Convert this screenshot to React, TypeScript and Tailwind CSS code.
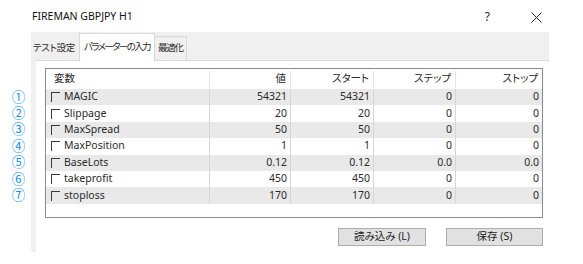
type Param = { name: string; value: string; start: string; step: string; stop: string };

const params: Param[] = [
  { name: "MAGIC", value: "54321", start: "54321", step: "0", stop: "0" },
  { name: "Slippage", value: "20", start: "20", step: "0", stop: "0" },
  { name: "MaxSpread", value: "50", start: "50", step: "0", stop: "0" },
  { name: "MaxPosition", value: "1", start: "1", step: "0", stop: "0" },
  { name: "BaseLots", value: "0.12", start: "0.12", step: "0.0", stop: "0.0" },
  { name: "takeprofit", value: "450", start: "450", step: "0", stop: "0" },
  { name: "stoploss", value: "170", start: "170", step: "0", stop: "0" },
];

const marks = ["①", "②", "③", "④", "⑤", "⑥", "⑦"];

// 列幅: 変数 / 値 / スタート / ステップ / ストップ
const cols = "grid grid-cols-[164px_81px_83px_82px_86px]";

function Checkbox() {
  return <span className="mr-[4px] inline-block h-[10px] w-[9px] shrink-0 border-l border-t border-[#3a3a3a]" />;
}

function ParamTable() {
  return (
    <div className="h-[150px] w-[498px] border border-[#8a8a8a] bg-white">
      <div className={`${cols} h-[20px] items-center whitespace-nowrap`}>
        <div className="border-r border-[#e3e3e3] pl-[8px]">変数</div>
        <div className="border-r border-[#e3e3e3] pr-[4px] text-right">値</div>
        <div className="border-r border-[#e3e3e3] pr-[4px] text-right">スタート</div>
        <div className="border-r border-[#e3e3e3] pr-[4px] text-right">ステップ</div>
        <div className="pr-[4px] text-right">ストップ</div>
      </div>
      {params.map((p, i) => (
        <div key={p.name} className={`${cols} h-[16.4px] items-center ${i % 2 === 0 ? "bg-[#e9e9e9]" : "bg-white"}`}>
          <div className="flex h-full items-center border-r border-[#d6d6d6] pl-[5px]">
            <Checkbox />
            <span className="text-[#2a2a2a]">{p.name}</span>
          </div>
          <div className="flex h-full items-center justify-end border-r border-[#d6d6d6] pr-[3px]">{p.value}</div>
          <div className="flex h-full items-center justify-end border-r border-[#d6d6d6] pr-[3px]">{p.start}</div>
          <div className="flex h-full items-center justify-end border-r border-[#d6d6d6] pr-[3px]">{p.step}</div>
          <div className="flex h-full items-center justify-end pr-[3px]">{p.stop}</div>
        </div>
      ))}
    </div>
  );
}

export default function App() {
  return (
    <div
      className="h-[264px] w-[583px] overflow-hidden bg-white text-[10.5px] text-[#2a2a2a]"
      style={{ fontFamily: "'Noto Sans', 'Noto Sans CJK JP', sans-serif", fontFeatureSettings: "'palt'" }}
    >
      {/* タイトルバー */}
      <div className="flex h-[32px] items-center pl-[32px] pt-[2px]">
        <span className="text-[10.5px] text-[#111]">FIREMAN GBPJPY H1</span>
        <span className="ml-auto mr-[41px] text-[12px] text-[#222]">?</span>
        <svg width="11" height="11" viewBox="0 0 11 11" className="mr-[41px]">
          <path d="M0.5 0.5 L10.5 10.5 M10.5 0.5 L0.5 10.5" stroke="#222" strokeWidth="1" />
        </svg>
      </div>

      <div className="flex">
        {/* 番号 */}
        <div className="flex w-[31px] flex-col items-center pl-[6px] pt-[57px]">
          {marks.map((m) => (
            <div key={m} className="flex h-[16.4px] items-center overflow-hidden text-[13.5px] leading-[15px] text-[#1a90e6]">
              {m}
            </div>
          ))}
        </div>

        {/* ダイアログ本体 */}
        <div className="flex h-[220px] w-[518px] flex-col bg-[#f0f0f0]">
          <div className="flex h-[28px] items-end whitespace-nowrap pl-[2px] text-[9.5px]">
            <div className="flex h-[24px] items-center pr-[4px] tracking-[-0.3px]">テスト設定</div>
            <div className="relative top-[1px] flex h-[28px] items-center border border-b-0 border-[#d9d9d9] bg-white px-[4px] tracking-[-1.6px]">
              パラメーターの入力
            </div>
            <div className="flex h-[24px] items-center border border-b-0 border-l-0 border-[#d9d9d9] px-[3px] tracking-[-1.2px]">
              最適化
            </div>
          </div>
          <div className="ml-[5px] flex flex-1 flex-col border-t border-[#d9d9d9] bg-white pl-[9px] pt-[7px]">
            <ParamTable />
            <div className="mt-[10px] flex w-[498px] justify-end gap-[20px]">
              <button className="h-[18px] w-[88px] whitespace-nowrap border border-[#adadad] bg-[#e1e1e1] text-[10.5px] text-[#222]">
                読み込み (L)
              </button>
              <button className="h-[18px] w-[97px] whitespace-nowrap border border-[#adadad] bg-[#e1e1e1] text-[10.5px] text-[#222]">
                保存 (S)
              </button>
            </div>
          </div>
        </div>
      </div>
    </div>
  );
}
